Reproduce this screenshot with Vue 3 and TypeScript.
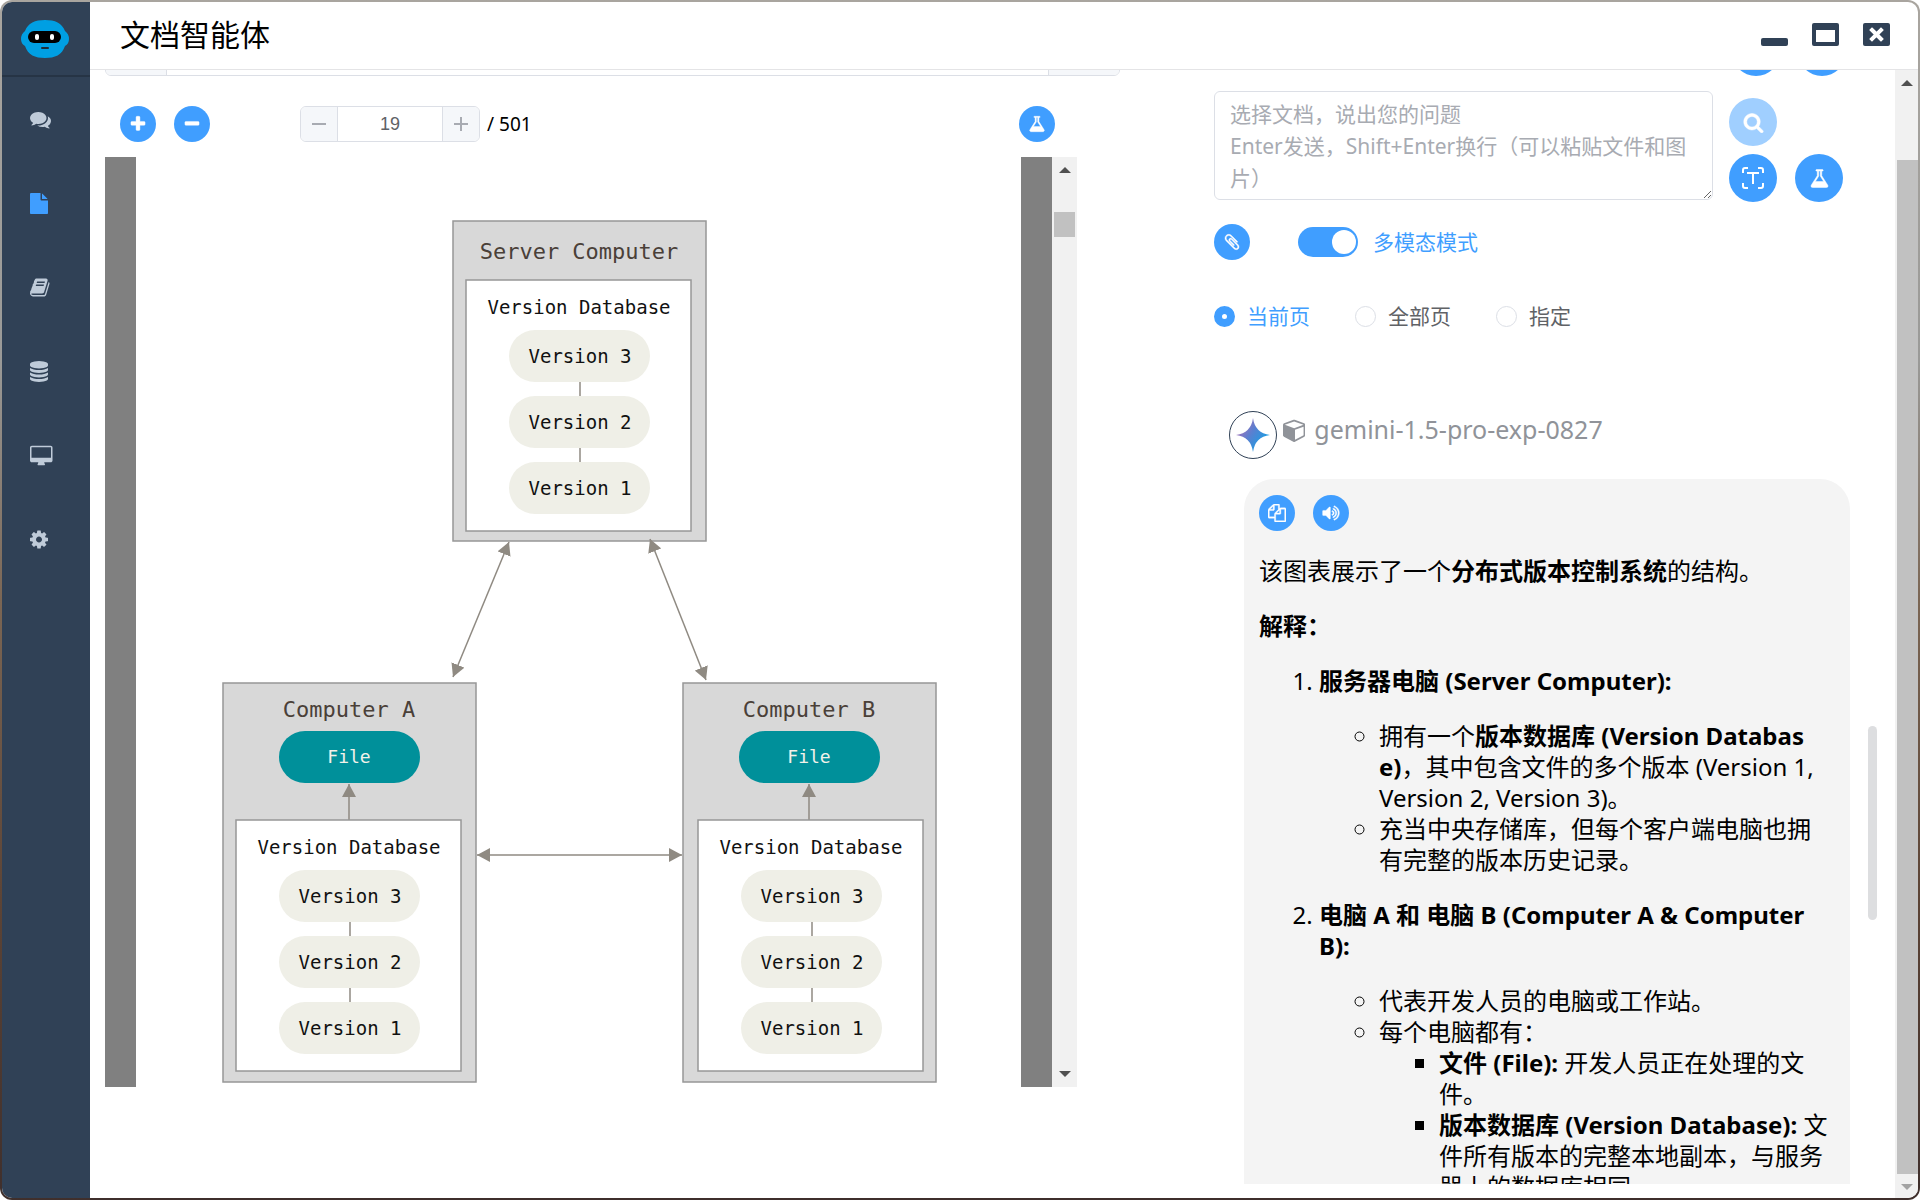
<script setup lang="ts">
import { ref } from 'vue'

interface Glyph {
  box: string
  d: string
}

const glyphs: Record<string, Glyph> = {
  comments: {
    box: '0 0 1792 1792',
    d: 'M1408 768q0 139-94 257t-256.5 186.5-353.5 68.5q-86 0-176-16-124 88-278 128-36 9-86 16h-3q-11 0-20.5-8t-11.5-21q-1-3-1-6.5t.5-6.5 2-6l2.5-5 3.5-5.5 4-5 4.5-5 4-4.5q5-6 23-25t26-29.5 22.5-29 25-38.5 20.5-44q-124-72-195-177t-71-224q0-139 94-257t256.5-186.5 353.5-68.5 353.5 68.5 256.5 186.5 94 257zm384 256q0 120-71 224.5t-195 176.5q10 24 20.5 44t25 38.5 22.5 29 26 29.5 23 25q1 1 4 4.5t4.5 5 4 5 3.5 5.5l2.5 5 2 6 .5 6.5-1 6.5q-3 14-13 22t-22 7q-50-7-86-16-154-40-278-128-90 16-176 16-271 0-472-132 58 4 88 4 161 0 309-45t264-129q125-92 192-212t67-254q0-77-23-152 129 71 204 178t75 230z',
  },
  file: {
    box: '128 0 1536 1792',
    d: 'M1152 512v-472q22 14 36 28l408 408q14 14 28 36h-472zm-128 32q0 40 28 68t68 28h544v1056q0 40-28 68t-68 28h-1344q-40 0-68-28t-28-68v-1600q0-40 28-68t68-28h800v544z',
  },
  book: {
    box: '64 0 1664 1792',
    d: 'M1703 478q40 57 18 129l-275 906q-19 64-76.5 107.5t-122.5 43.5h-923q-77 0-148.5-53.5t-99.5-131.5q-24-67-2-127 0-4 3-27t4-37q1-8-3-21.5t-3-19.5q2-11 8-21t16.5-23.5 16.5-23.5q23-38 45-91.5t30-91.5q3-10 .5-30t-.5-28q3-11 17-28t17-23q21-36 42-92t25-90q1-9-2.5-32t.5-28q4-13 22-30.5t22-22.5q19-26 42.5-84.5t27.5-96.5q1-8-3-25.5t-2-26.5q2-8 9-18t18-23 17-21q8-12 16.5-30.5t15-35 16-36 19.5-32 26.5-23.5 36-11.5 47.5 5.5l-1 3q38-9 51-9h761q74 0 114 56t18 130l-274 906q-36 119-71.5 153.5t-128.5 34.5h-869q-27 0-38 15-11 16-1 43 24 70 144 70h923q29 0 56-15.5t35-41.5l300-987q7-22 5-57 38 15 59 43zm-1064 2q-4 13 2 22.5t20 9.5h608q13 0 25.5-9.5t16.5-22.5l21-64q4-13-2-22.5t-20-9.5h-608q-13 0-25.5 9.5t-16.5 22.5zm-83 256q-4 13 2 22.5t20 9.5h608q13 0 25.5-9.5t16.5-22.5l21-64q4-13-2-22.5t-20-9.5h-608q-13 0-25.5 9.5t-16.5 22.5z',
  },
  database: {
    box: '128 0 1536 1792',
    d: 'M896 768q237 0 443-43t325-127v170q0 69-103 128t-280 93.5-385 34.5-385-34.5-280-93.5-103-128v-170q119 84 325 127t443 43zm0 768q237 0 443-43t325-127v170q0 69-103 128t-280 93.5-385 34.5-385-34.5-280-93.5-103-128v-170q119 84 325 127t443 43zm0-384q237 0 443-43t325-127v170q0 69-103 128t-280 93.5-385 34.5-385-34.5-280-93.5-103-128v-170q119 84 325 127t443 43zm0-1152q208 0 385 34.5t280 93.5 103 128v128q0 69-103 128t-280 93.5-385 34.5-385-34.5-280-93.5-103-128v-128q0-69 103-128t280-93.5 385-34.5z',
  },
  desktop: {
    box: '-64 -64 1920 1792',
    d: 'M1728 992v-832q0-13-9.5-22.5t-22.5-9.5h-1600q-13 0-22.5 9.5t-9.5 22.5v832q0 13 9.5 22.5t22.5 9.5h1600q13 0 22.5-9.5t9.5-22.5zm128-832v1088q0 66-47 113t-113 47h-544q0 37 16 77.5t32 71 16 43.5q0 26-19 45t-45 19h-512q-26 0-45-19t-19-45q0-14 16-44t32-70 16-78h-544q-66 0-113-47t-47-113v-1088q0-66 47-113t113-47h1600q66 0 113 47t47 113z',
  },
  cog: {
    box: '128 0 1536 1792',
    d: 'M1152 896q0-106-75-181t-181-75-181 75-75 181 75 181 181 75 181-75 75-181zm512-109v222q0 12-8 23t-20 13l-185 28q-19 54-39 91 35 50 107 138 10 12 10 25t-9 23q-27 37-99 108t-94 71q-12 0-26-9l-138-108q-44 23-91 38-16 136-29 186-7 28-36 28h-222q-14 0-24.5-8.5t-11.5-21.5l-28-184q-49-16-90-37l-141 107q-10 9-25 9-14 0-25-11-126-114-165-168-7-10-7-23 0-12 8-23 15-21 51-66.5t54-70.5q-27-50-41-99l-183-27q-13-2-21-12.5t-8-23.5v-222q0-12 8-23t19-13l186-28q14-46 39-92-40-57-107-138-10-12-10-24 0-10 9-23 26-36 98.5-107.5t94.5-71.5q13 0 26 10l138 107q44-23 91-38 16-136 29-186 7-28 36-28h222q14 0 24.5 8.5t11.5 21.5l28 184q49 16 90 37l142-107q9-9 24-9 13 0 25 10 129 119 165 170 7 8 7 22 0 12-8 23-15 21-51 66.5t-54 70.5q26 50 41 98l183 28q13 2 21 12.5t8 23.5z',
  },
  plus: {
    box: '0 0 1792 1792',
    d: 'M1600 736v192q0 40-28 68t-68 28h-416v416q0 40-28 68t-68 28h-192q-40 0-68-28t-28-68v-416h-416q-40 0-68-28t-28-68v-192q0-40 28-68t68-28h416v-416q0-40 28-68t68-28h192q40 0 68 28t28 68v416h416q40 0 68 28t28 68z',
  },
  minus: {
    box: '0 0 1792 1792',
    d: 'M1600 736v192q0 40-28 68t-68 28h-1216q-40 0-68-28t-28-68v-192q0-40 28-68t68-28h1216q40 0 68 28t28 68z',
  },
  flask: {
    box: '0 0 1792 1792',
    d: 'M1591 1448q56 89 21.5 152.5t-140.5 63.5h-1152q-106 0-140.5-63.5t21.5-152.5l503-793v-399h-64q-26 0-45-19t-19-45 19-45 45-19h512q26 0 45 19t19 45-19 45-45 19h-64v399zm-779-725l-272 429h712l-272-429-20-31v-436h-128v436z',
  },
  search: {
    box: '0 0 1792 1792',
    d: 'M1216 832q0-185-131.5-316.5t-316.5-131.5-316.5 131.5-131.5 316.5 131.5 316.5 316.5 131.5 316.5-131.5 131.5-316.5zm512 832q0 52-38 90t-90 38q-54 0-90-38l-343-342q-179 124-399 124-143 0-273.5-55.5t-225-150-150-225-55.5-273.5 55.5-273.5 150-225 225-150 273.5-55.5 273.5 55.5 225 150 150 225 55.5 273.5q0 220-124 399l343 343q37 37 37 90z',
  },
  paperclip: {
    box: '0 0 1792 1792',
    d: 'M1596 1385q0 117-79 196t-196 79q-135 0-235-100l-777-776q-113-115-113-271 0-159 110-270t269-111q158 0 273 113l605 606q10 10 10 22 0 16-30.5 46.5t-46.5 30.5q-13 0-23-10l-606-607q-79-77-181-77-106 0-179 75t-73 181q0 105 76 181l776 777q63 63 145 63 64 0 106-42t42-106q0-82-63-145l-581-581q-26-24-60-24-29 0-48 19t-19 48q0 32 25 59l410 410q10 10 10 22 0 16-31 47t-47 31q-12 0-22-10l-410-410q-63-61-63-149 0-82 57-139t139-57q88 0 149 63l581 581q100 98 100 235z',
  },
  cube: {
    box: '0 0 1664 1792',
    d: 'M896 1629l640-349v-636l-640 233v752zm-64-865l698-254-698-254-698 254 698 254zm832-252v768q0 35-18 65t-49 47l-704 384q-28 16-61 16t-61-16l-704-384q-31-17-49-47t-18-65v-768q0-40 23-73t61-47l704-256q22-8 44-8t44 8l704 256q38 14 61 47t23 73z',
  },
  copy: {
    box: '0 0 1792 1792',
    d: 'M1696 384q40 0 68 28t28 68v1216q0 40-28 68t-68 28h-960q-40 0-68-28t-28-68v-288h-544q-40 0-68-28t-28-68v-672q0-40 20-88t48-76l408-408q28-28 76-48t88-20h416q40 0 68 28t28 68v328q68-40 128-40h416zm-544 213l-299 299h299v-299zm-640-384l-299 299h299v-299zm196 647l316-316v-416h-384v416q0 40-28 68t-68 28h-416v640h512v-256q0-40 20-88t48-76zm956 804v-1152h-384v416q0 40-28 68t-68 28h-416v640h896z',
  },
  volume: {
    box: '0 0 1792 1792',
    d: 'M832 352v1088q0 26-19 45t-45 19-45-19l-333-333h-262q-26 0-45-19t-19-45v-384q0-26 19-45t45-19h262l333-333q19-19 45-19t45 19 19 45zm384 544q0 76-42.5 141.5t-112.5 93.5q-10 5-25 5-26 0-45-18.5t-19-45.5q0-21 12-35.5t29-25 34-23 29-35.5 12-57-12-57-29-35.5-34-23-29-25-12-35.5q0-27 19-45.5t45-18.5q15 0 25 5 70 27 112.5 93t42.5 142zm256 0q0 153-85 282.5t-225 188.5q-13 5-25 5-27 0-46-19t-19-45q0-39 39-59 56-29 76-44 74-54 115.5-135.5t41.5-173.5-41.5-173.5-115.5-135.5q-20-15-76-44-39-20-39-59 0-26 19-45t45-19q13 0 26 5 140 59 225 188.5t85 282.5zm256 0q0 230-127 422.5t-338 283.5q-13 5-26 5-26 0-45-19t-19-45q0-36 39-59 7-4 22.5-10.5t22.5-10.5q46-25 82-51 123-91 192-227t69-289-69-289-192-227q-36-26-82-51-7-4-22.5-10.5t-22.5-10.5q-39-23-39-59 0-26 19-45t45-19q13 0 26 5 211 91 338 283.5t127 422.5z',
  },
}

const navItems = [
  { icon: 'comments', label: '对话' },
  { icon: 'file', label: '文档' },
  { icon: 'book', label: '知识库' },
  { icon: 'database', label: '数据' },
  { icon: 'desktop', label: '桌面' },
  { icon: 'cog', label: '设置' },
]
const activeNav = ref('file')

const page = ref(19)
const pageCount = 501
const step = (by: number) => {
  page.value = Math.min(pageCount, Math.max(1, page.value + by))
}

const question = ref('')
const hint = '选择文档，说出您的问题\nEnter发送，Shift+Enter换行（可以粘贴文件和图片）'
const multimodal = ref(true)
const scopes = [
  { value: 'current', label: '当前页' },
  { value: 'all', label: '全部页' },
  { value: 'custom', label: '指定' },
]
const scope = ref('current')

/* Nodes of the version-control diagram, in page coordinates. */
const computers = [
  { name: 'Server Computer', x: 317, y: 64, h: 320, titleY: 102, dbX: 330, dbY: 123, file: false },
  { name: 'Computer A', x: 87, y: 526, h: 399, titleY: 560, dbX: 100, dbY: 663, file: true },
  { name: 'Computer B', x: 547, y: 526, h: 399, titleY: 560, dbX: 562, dbY: 663, file: true },
]
const versions = [3, 2, 1]
</script>

<template>
  <div class="desk">
    <div class="window">
      <aside class="side">
        <div class="brand">
          <svg width="48" height="38" viewBox="0 0 48 38" aria-hidden="true">
            <path
              d="M24 0C34 0 41 3 44 11Q48 14 48 19T44 26C41 35 34 38 24 38S7 35 4 26Q0 24 0 19T4 11C7 3 14 0 24 0Z"
              fill="#009fe3"
            />
            <rect x="7" y="11" width="33" height="12" rx="6" fill="#000" />
            <rect x="14" y="14" width="4" height="6" rx="2" fill="#fff" />
            <rect x="29" y="14" width="4" height="6" rx="2" fill="#fff" />
            <rect x="20" y="27" width="8" height="2" rx="1" fill="#1d2b36" />
          </svg>
        </div>
        <nav class="nav">
          <button
            v-for="item in navItems"
            :key="item.icon"
            type="button"
            class="nav-item"
            :class="{ active: activeNav === item.icon }"
            :aria-label="item.label"
            @click="activeNav = item.icon"
          >
            <svg class="glyph g21" :viewBox="glyphs[item.icon].box"><path :d="glyphs[item.icon].d" /></svg>
          </button>
        </nav>
      </aside>

      <div class="main">
        <header class="head">
          <h1>文档智能体</h1>
          <div class="win-actions">
            <button type="button" aria-label="最小化">
              <svg width="27" height="23" viewBox="0 0 27 23"><rect y="15" width="27" height="8" rx="2" fill="#304156" /></svg>
            </button>
            <button type="button" aria-label="最大化">
              <svg width="27" height="23" viewBox="0 0 27 23">
                <rect width="27" height="23" rx="2" fill="#304156" />
                <rect x="4" y="7" width="19" height="12" fill="#fff" />
              </svg>
            </button>
            <button type="button" aria-label="关闭">
              <svg width="27" height="23" viewBox="0 0 27 23">
                <rect width="27" height="23" rx="2" fill="#304156" />
                <path d="M9 7L18 16M18 7L9 16" stroke="#fff" stroke-width="4" stroke-linecap="square" />
              </svg>
            </button>
          </div>
        </header>

        <div class="body">
          <div class="columns">
            <section class="left">
              <div class="picker"><span class="cap start"></span><span class="cap end"></span></div>

              <div class="toolbar">
                <button type="button" class="round" aria-label="放大">
                  <svg class="glyph g18" :viewBox="glyphs.plus.box"><path :d="glyphs.plus.d" /></svg>
                </button>
                <button type="button" class="round" aria-label="缩小">
                  <svg class="glyph g18" :viewBox="glyphs.minus.box"><path :d="glyphs.minus.d" /></svg>
                </button>
                <div class="pager">
                  <button type="button" aria-label="上一页" @click="step(-1)">
                    <svg width="14" height="14" viewBox="0 0 14 14"><path d="M0 7H14" /></svg>
                  </button>
                  <input v-model="page" type="text" aria-label="页码" />
                  <button type="button" class="next" aria-label="下一页" @click="step(1)">
                    <svg width="14" height="14" viewBox="0 0 14 14"><path d="M0 7H14M7 0V14" /></svg>
                  </button>
                </div>
                <span class="total">/ {{ pageCount }}</span>
                <button type="button" class="round last" aria-label="分析">
                  <svg class="glyph g18" :viewBox="glyphs.flask.box"><path :d="glyphs.flask.d" /></svg>
                </button>
              </div>

              <div class="viewer">
                <div class="sheet">
                  <svg class="diagram" viewBox="0 0 885 930">
                    <defs>
                      <marker
                        id="tip"
                        viewBox="0 0 13 14"
                        refX="13"
                        refY="7"
                        markerWidth="13"
                        markerHeight="14"
                        markerUnits="userSpaceOnUse"
                        orient="auto-start-reverse"
                      >
                        <path d="M0 0L13 7L0 14Z" fill="#8f8a82" />
                      </marker>
                    </defs>
                    <g v-for="c in computers" :key="c.name">
                      <rect class="machine" :x="c.x" :y="c.y" width="253" :height="c.h" />
                      <text class="t-name" :x="c.x + 126" :y="c.titleY">{{ c.name }}</text>
                      <template v-if="c.file">
                        <rect class="file" :x="c.x + 56" y="574" width="141" height="52" rx="26" />
                        <text class="t-file" :x="c.x + 126" y="606">File</text>
                        <path class="link" :d="`M${c.x + 126} 663V627`" marker-end="url(#tip)" />
                      </template>
                      <rect class="db" :x="c.dbX" :y="c.dbY" width="225" height="251" />
                      <text class="t-db" :x="c.dbX + 113" :y="c.dbY + 34">Version Database</text>
                      <path class="link" :d="`M${c.dbX + 114} ${c.dbY + 60}V${c.dbY + 210}`" />
                      <g v-for="(v, i) in versions" :key="v">
                        <rect class="pill" :x="c.dbX + 43" :y="c.dbY + 50 + i * 66" width="141" height="52" rx="26" />
                        <text class="t-db" :x="c.dbX + 114" :y="c.dbY + 83 + i * 66">Version {{ v }}</text>
                      </g>
                    </g>
                    <path class="link" d="M373 385L317 520" marker-start="url(#tip)" marker-end="url(#tip)" />
                    <path class="link" d="M514 382L570 523" marker-start="url(#tip)" marker-end="url(#tip)" />
                    <path class="link" d="M341 698H546" marker-start="url(#tip)" marker-end="url(#tip)" />
                  </svg>
                </div>
                <div class="bar">
                  <svg class="arrow" width="12" height="6" viewBox="0 0 12 6"><path d="M6 0L12 6H0Z" /></svg>
                  <span class="thumb short"></span>
                  <svg class="arrow down" width="12" height="6" viewBox="0 0 12 6"><path d="M0 0H12L6 6Z" /></svg>
                </div>
              </div>
            </section>

            <section class="right">
              <div class="hidden-actions">
                <button type="button" class="round big" aria-label="上传"></button>
                <button type="button" class="round big" aria-label="刷新"></button>
              </div>

              <div class="ask">
                <textarea v-model="question" :placeholder="hint" aria-label="问题"></textarea>
                <div class="ask-actions">
                  <button type="button" class="round big" disabled aria-label="搜索">
                    <svg class="glyph g21" :viewBox="glyphs.search.box"><path :d="glyphs.search.d" /></svg>
                  </button>
                  <button type="button" class="round big below" aria-label="识别文字">
                    <svg width="22" height="22" viewBox="0 0 22 22" fill="none" stroke="#fff" stroke-width="2">
                      <path d="M1 6V3Q1 1 3 1H6M16 1H19Q21 1 21 3V6M21 16V19Q21 21 19 21H16M6 21H3Q1 21 1 19V16" />
                      <path d="M5 6H17M11 6V17" />
                    </svg>
                  </button>
                  <button type="button" class="round big below" aria-label="分析">
                    <svg class="glyph g21" :viewBox="glyphs.flask.box"><path :d="glyphs.flask.d" /></svg>
                  </button>
                </div>
              </div>

              <div class="modes">
                <button type="button" class="round" aria-label="附件">
                  <svg class="glyph g18" :viewBox="glyphs.paperclip.box"><path :d="glyphs.paperclip.d" /></svg>
                </button>
                <label class="switch">
                  <input v-model="multimodal" type="checkbox" />
                  <span>多模态模式</span>
                </label>
              </div>

              <div class="scopes">
                <label v-for="s in scopes" :key="s.value" :class="{ on: scope === s.value }">
                  <input v-model="scope" type="radio" name="scope" :value="s.value" />
                  <span>{{ s.label }}</span>
                </label>
              </div>

              <div class="chat">
                <div class="author">
                  <span class="avatar">
                    <svg width="34" height="34" viewBox="0 0 34 34" aria-hidden="true">
                      <defs>
                        <linearGradient id="spark" x1="4" y1="8" x2="28" y2="24" gradientUnits="userSpaceOnUse">
                          <stop offset="0" stop-color="#a572b8" />
                          <stop offset="0.45" stop-color="#5b7fd0" />
                          <stop offset="1" stop-color="#1f9ce2" />
                        </linearGradient>
                      </defs>
                      <path d="M17 0Q19 15 34 17Q19 19 17 34Q15 19 0 17Q15 15 17 0Z" fill="url(#spark)" />
                    </svg>
                  </span>
                  <svg class="glyph g24" :viewBox="glyphs.cube.box"><path :d="glyphs.cube.d" /></svg>
                  <span class="model">gemini-1.5-pro-exp-0827</span>
                </div>

                <article class="bubble">
                  <div class="bubble-actions">
                    <button type="button" class="round" aria-label="复制">
                      <svg class="glyph g18" :viewBox="glyphs.copy.box"><path :d="glyphs.copy.d" /></svg>
                    </button>
                    <button type="button" class="round" aria-label="朗读">
                      <svg class="glyph g18" :viewBox="glyphs.volume.box"><path :d="glyphs.volume.d" /></svg>
                    </button>
                  </div>
                  <p>该图表展示了一个<strong>分布式版本控制系统</strong>的结构。</p>
                  <p><strong>解释：</strong></p>
                  <ol>
                    <li>
                      <p><strong>服务器电脑 (Server Computer):</strong></p>
                      <ul>
                        <li>拥有一个<strong>版本数据库 (Version Database)</strong>，其中包含文件的多个版本 (Version 1, Version 2, Version 3)。</li>
                        <li>充当中央存储库，但每个客户端电脑也拥有完整的版本历史记录。</li>
                      </ul>
                    </li>
                    <li>
                      <p><strong>电脑 A 和 电脑 B (Computer A &amp; Computer B):</strong></p>
                      <ul>
                        <li>代表开发人员的电脑或工作站。</li>
                        <li>
                          每个电脑都有：
                          <ul>
                            <li><strong>文件 (File):</strong> 开发人员正在处理的文件。</li>
                            <li><strong>版本数据库 (Version Database):</strong> 文件所有版本的完整本地副本，与服务器上的数据库相同。</li>
                          </ul>
                        </li>
                      </ul>
                    </li>
                  </ol>
                </article>
                <span class="chat-thumb"></span>
              </div>
            </section>
          </div>

          <div class="bar outer">
            <svg class="arrow" width="12" height="6" viewBox="0 0 12 6"><path d="M6 0L12 6H0Z" /></svg>
            <span class="thumb long"></span>
            <svg class="arrow faint" width="12" height="6" viewBox="0 0 12 6"><path d="M0 0H12L6 6Z" /></svg>
          </div>
        </div>
      </div>
    </div>
  </div>
</template>

<style>
body {
  margin: 0;
  background: #fff;
}
</style>

<style scoped>
* {
  box-sizing: border-box;
}

button {
  display: flex;
  align-items: center;
  justify-content: center;
  padding: 0;
  border: 0;
  background: none;
  cursor: pointer;
}

.desk {
  height: 100vh;
  padding: 2px;
  border-radius: 12px;
  background: linear-gradient(#a9a59f, #9a9a98 30%, #7b6654 50%, #5c4436 75%, #3f2f2c);
  font-family: 'Noto Sans', 'Noto Sans CJK SC', sans-serif;
  color: #000;
}

.window {
  display: flex;
  height: 100%;
  overflow: hidden;
  border-radius: 10px;
  background: #fff;
}

.side {
  flex: 0 0 88px;
  background: #304156;
}

.brand {
  display: flex;
  align-items: center;
  height: 75px;
  padding-left: 19px;
  border-bottom: 2px solid #263445;
}

.nav-item {
  justify-content: flex-start;
  width: 100%;
  height: 84px;
  padding-left: 28px;
  color: #bfcbd9;
}

.nav-item.active {
  color: #409eff;
}

.glyph {
  display: block;
  width: auto;
  fill: currentColor;
}

.round .glyph {
  stroke: currentColor;
  stroke-width: 40;
}

.g18 {
  height: 18px;
}

.g21 {
  height: 21px;
}

.g24 {
  height: 24px;
}

.main {
  display: flex;
  flex: 1;
  flex-direction: column;
  min-width: 0;
}

.head {
  display: flex;
  flex: 0 0 68px;
  align-items: center;
  justify-content: space-between;
  padding: 0 28px 2px 30px;
  border-bottom: 1px solid #e4e4e6;
}

h1 {
  margin: 0;
  font-size: 30px;
  font-weight: 400;
  line-height: 40px;
}

.win-actions {
  display: flex;
  gap: 24px;
}

.body {
  display: flex;
  flex: 1;
  min-height: 0;
}

.columns {
  display: grid;
  flex: 1;
  grid-template-columns: minmax(0, 1015fr) minmax(0, 663fr);
  grid-template-rows: minmax(0, 1fr);
  gap: 94px;
  padding: 0 18px 0 15px;
  overflow: hidden;
}

.left,
.right {
  display: flex;
  flex-direction: column;
  min-height: 0;
}

.picker {
  display: flex;
  flex: 0 0 36px;
  justify-content: space-between;
  margin-top: -30px;
  overflow: hidden;
  border: 1px solid #dcdfe6;
  border-radius: 6px;
}

.cap {
  width: 61px;
  border-right: 1px solid #dcdfe6;
  background: #f5f7fa;
}

.cap.end {
  width: 71px;
  border-right: 0;
  border-left: 1px solid #dcdfe6;
}

.toolbar {
  display: flex;
  align-items: center;
  margin: 30px 65px 15px 15px;
}

.round {
  flex: none;
  width: 36px;
  height: 36px;
  border-radius: 50%;
  background: #409eff;
  color: #fff;
}

.round.big {
  width: 48px;
  height: 48px;
}

.round:disabled {
  background: #a0cfff;
}

.toolbar .round + .round {
  margin-left: 18px;
}

.toolbar .last {
  margin-left: auto;
}

.pager {
  display: flex;
  width: 180px;
  height: 36px;
  margin: 0 7px 0 90px;
  overflow: hidden;
  border: 1px solid #dcdfe6;
  border-radius: 6px;
}

.pager button {
  width: 37px;
  border-right: 1px solid #dcdfe6;
  background: #f5f7fa;
}

.pager .next {
  border-right: 0;
  border-left: 1px solid #dcdfe6;
}

.pager path {
  stroke: #a8abb2;
  stroke-width: 2;
}

.pager input {
  flex: 1;
  min-width: 0;
  padding: 0;
  border: 0;
  outline: 0;
  font: 18px 'Liberation Sans', sans-serif;
  text-align: center;
  color: #606266;
}

.total {
  font-size: 19px;
  line-height: 24px;
}

.viewer {
  display: flex;
  flex: 1;
  min-height: 0;
  margin: 0 43px 111px 0;
}

.sheet {
  flex: 1;
  overflow: hidden;
  border: solid #808080;
  border-width: 0 31px;
}

.diagram {
  display: block;
  width: 100%;
}

.machine {
  fill: #d8d8d8;
  stroke: #979797;
  stroke-width: 1.5;
}

.db {
  fill: #fff;
  stroke: #979797;
  stroke-width: 1.5;
}

.pill {
  fill: #efefe7;
}

.file {
  fill: #00909a;
}

.link {
  fill: none;
  stroke: #8f8a82;
  stroke-width: 1.5;
}

.diagram text {
  font-family: 'DejaVu Sans Mono', monospace;
  text-anchor: middle;
}

.t-name {
  font-size: 22px;
  fill: #4a4038;
}

.t-db {
  font-size: 19px;
  fill: #111;
}

.diagram .t-file {
  font-size: 18px;
  fill: #f2f2ea;
}

.bar {
  display: flex;
  flex: 0 0 25px;
  flex-direction: column;
  align-items: center;
  padding: 10px 0;
  background: #f1f1f1;
}

.bar.outer {
  flex-basis: 23px;
  padding-bottom: 8px;
}

.arrow {
  flex: none;
  fill: #505050;
}

.arrow.down {
  margin-top: auto;
}

.arrow.faint {
  margin-top: 10px;
  fill: #a3a3a3;
}

.thumb {
  width: 21px;
  background: #c1c1c1;
}

.thumb.short {
  height: 25px;
  margin-top: 39px;
}

.thumb.long {
  align-self: flex-end;
  flex: 1;
  margin-top: 74px;
}

.hidden-actions {
  display: flex;
  flex: none;
  gap: 18px;
  justify-content: flex-end;
  margin: -42px 31px 15px 0;
}

.ask {
  display: flex;
  gap: 16px;
  margin-right: 34px;
}

textarea {
  flex: 1;
  min-width: 0;
  height: 109px;
  padding: 6px 8px 4px 15px;
  overflow: hidden;
  border: 1px solid #dcdfe6;
  border-radius: 6px;
  outline: 0;
  font: inherit;
  font-size: 21px;
  line-height: 32px;
  resize: vertical;
}

textarea::placeholder {
  color: #a8abb2;
}

.ask-actions {
  display: grid;
  grid-template-columns: 48px 48px;
  gap: 8px 18px;
  margin-top: 7px;
}

.ask-actions .below {
  grid-row: 2;
}

.modes {
  display: flex;
  align-items: center;
  gap: 48px;
  margin-top: 22px;
}

.switch {
  display: flex;
  align-items: center;
  gap: 15px;
  font-size: 21px;
  line-height: 31px;
  color: #409eff;
}

.switch input {
  display: flex;
  align-items: center;
  width: 60px;
  height: 30px;
  margin: 0;
  padding: 0 2px;
  border-radius: 15px;
  background: #dcdfe6;
  appearance: none;
}

.switch input::before {
  width: 24px;
  height: 24px;
  border-radius: 50%;
  background: #fff;
  content: '';
}

.switch input:checked {
  justify-content: flex-end;
  background: #409eff;
}

.scopes {
  display: flex;
  gap: 45px;
  margin-top: 41px;
}

.scopes label {
  display: flex;
  align-items: center;
  gap: 12px;
  font-size: 21px;
  line-height: 31px;
  color: #606266;
}

.scopes .on {
  color: #409eff;
}

.scopes input {
  width: 21px;
  height: 21px;
  margin: 0;
  border: 1px solid #dcdfe6;
  border-radius: 50%;
  appearance: none;
}

.scopes input:checked {
  border: 8px solid #409eff;
}

.chat {
  position: relative;
  flex: 1;
  min-height: 0;
  margin: 79px 0 14px;
  padding: 0 27px 0 15px;
  overflow: hidden;
}

.author {
  display: flex;
  align-items: flex-start;
  color: #909399;
}

.avatar {
  display: flex;
  align-items: center;
  justify-content: center;
  width: 48px;
  height: 48px;
  border: 1px solid #304156;
  border-radius: 50%;
}

.author .glyph {
  margin: 7px 9px 0 6px;
}

.model {
  font-size: 25px;
  line-height: 37px;
}

.bubble {
  margin: 20px 0 0 15px;
  padding: 16px 17px 100px 15px;
  border-radius: 30px;
  background: #f4f4f4;
  font-size: 24px;
  line-height: 31px;
  word-break: break-all;
}

.bubble-actions {
  display: flex;
  gap: 18px;
}

.bubble p {
  margin: 24px 0;
}

.bubble ol,
.bubble ul {
  margin: 0;
  padding-left: 60px;
}

.bubble ul {
  list-style: circle;
}

.bubble ul ul {
  list-style: square;
}

.chat-thumb {
  position: absolute;
  top: 315px;
  right: 0;
  width: 9px;
  height: 194px;
  border-radius: 5px;
  background: #dddee0;
}
</style>
